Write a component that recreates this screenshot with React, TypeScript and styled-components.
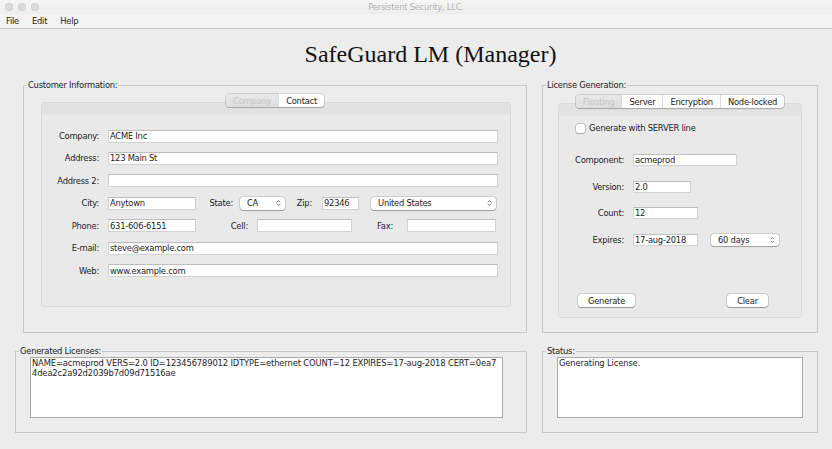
import React from "react";
import styled, { createGlobalStyle, css } from "styled-components";

const GlobalStyle = createGlobalStyle`
  html, body { margin: 0; padding: 0; background: #ececec; }
  #root { width: 832px; height: 449px; overflow: hidden; }
  *, *::before, *::after { box-sizing: border-box; }
`;

const SANS = `"DejaVu Sans", "Noto Sans", Arial, sans-serif`;

const Window = styled.div`
  width: 832px;
  height: 449px;
  display: flex;
  flex-direction: column;
  background: #ececec;
  font-family: ${SANS};
  font-size: 8.4px;
  letter-spacing: -0.25px;
  color: #1c1c1c;
`;

const TitleBar = styled.header`
  flex: 0 0 14px;
  display: grid;
  grid-template-columns: 1fr auto 1fr;
  align-items: center;
  background: linear-gradient(#f6f6f6, #ededed);
`;

const Lights = styled.div`
  display: flex;
  gap: 5px;
  margin-left: 5px;
`;

const Light = styled.span`
  width: 8px;
  height: 8px;
  border-radius: 50%;
  background: #dadada;
  box-shadow: inset 0 0 0 0.5px #cbcbcb;
`;

const WindowTitle = styled.div`
  color: #b4b4b4;
`;

const MenuBar = styled.nav`
  flex: 0 0 15px;
  display: flex;
  align-items: center;
  gap: 13px;
  padding-left: 6px;
  border-bottom: 1px solid #c6c6c6;
  background: #f3f3f3;
`;

const MenuItem = styled.span``;

const Heading = styled.h1`
  flex: 0 0 51px;
  margin: 0;
  padding: 12px 0 0 29px;
  text-align: center;
  font: 400 24px/27px "Liberation Serif", "Times New Roman", serif;
  letter-spacing: 0;
  color: #111;
`;

const Main = styled.main`
  display: grid;
  grid-template-columns: 512px 276px;
  grid-template-rows: 253px 87px;
  column-gap: 15px;
  row-gap: 13px;
  padding-left: 15px;
`;

const Group = styled.fieldset<{ $indent?: number }>`
  margin: 0 0 0 ${(p) => p.$indent ?? 0}px;
  padding: 0;
  min-width: 0;
  border: 1px solid #c9c9c9;
  display: flex;
  flex-direction: column;
`;

const Legend = styled.legend`
  margin-left: 3px;
  padding: 0 1px;
  line-height: 10px;
  color: #222;
`;

const TabStrip = styled.div<{ $top: number }>`
  align-self: center;
  display: flex;
  height: 13px;
  margin: ${(p) => p.$top}px 0 -5px;
  position: relative;
  z-index: 1;
  border-radius: 3px;
  background: #fff;
  box-shadow: 0 0 0 0.5px rgba(0, 0, 0, 0.22), 0 0.5px 1px rgba(0, 0, 0, 0.18);
  overflow: hidden;
`;

const Tab = styled.span<{ $active?: boolean }>`
  display: flex;
  align-items: center;
  padding: 0 7px;
  white-space: nowrap;
  ${(p) =>
    p.$active
      ? css`
          background: linear-gradient(#e8e8e8, #dedede);
          color: #c6c6c6;
        `
      : css`
          color: #1c1c1c;
        `}
  & + & {
    border-left: 1px solid #dcdcdc;
  }
`;

const Panel = styled.div<{ $left: number; $right: number; $height: number }>`
  margin: 0 ${(p) => p.$right}px 0 ${(p) => p.$left}px;
  height: ${(p) => p.$height}px;
  border: 1px solid #dadada;
  border-radius: 3px;
  background: linear-gradient(#e2e2e2 0, #e2e2e2 11px, #e9e9e9 12px);
  display: flex;
  flex-direction: column;
`;

const Form = styled.div<{ $top: number; $gap: number }>`
  display: flex;
  flex-direction: column;
  margin-top: ${(p) => p.$top}px;
  row-gap: ${(p) => p.$gap}px;
`;

const Row = styled.div<{ $h: number }>`
  display: flex;
  align-items: center;
  height: ${(p) => p.$h}px;
`;

const Label = styled.label<{ $w: number; $gap?: number }>`
  flex: 0 0 ${(p) => p.$w}px;
  padding-right: ${(p) => p.$gap ?? 9}px;
  text-align: right;
  white-space: nowrap;
`;

const Field = styled.input<{ $w: number; $ml?: number }>`
  flex: 0 0 ${(p) => p.$w}px;
  width: ${(p) => p.$w}px;
  height: 100%;
  margin: 0 0 0 ${(p) => p.$ml ?? 0}px;
  padding: 0 1px;
  border: 1px solid #d2d2d2;
  border-top-color: #bdbdbd;
  border-radius: 0;
  background: #fff;
  font: inherit;
  letter-spacing: inherit;
  color: inherit;
  outline: none;
`;

const Combo = styled.div<{ $w: number; $ml?: number }>`
  flex: 0 0 ${(p) => p.$w}px;
  height: 100%;
  margin-left: ${(p) => p.$ml ?? 0}px;
  display: flex;
  align-items: center;
  justify-content: space-between;
  padding: 0 4px 0 7px;
  background: #fff;
  border-radius: 3px;
  box-shadow: 0 0 0 0.5px rgba(0, 0, 0, 0.2), 0 0.5px 1px rgba(0, 0, 0, 0.25);
`;

const Arrows = () => (
  <svg width="5" height="8" viewBox="0 0 5 8" aria-hidden="true">
    <path d="M1 3.2 L2.5 1.6 L4 3.2 M1 4.8 L2.5 6.4 L4 4.8" fill="none" stroke="#555" strokeWidth="0.8" />
  </svg>
);

const CheckRow = styled.label`
  display: flex;
  align-items: center;
  height: 10px;
  margin: 19px 0 0 17px;
  gap: 4px;
`;

const CheckBox = styled.span`
  width: 9px;
  height: 9px;
  border-radius: 2px;
  background: #fff;
  box-shadow: 0 0 0 0.5px rgba(0, 0, 0, 0.3), 0 0.5px 1px rgba(0, 0, 0, 0.15);
`;

const ButtonRow = styled.div`
  display: flex;
  justify-content: space-between;
  height: 13px;
  margin-top: 48px;
  padding: 0 33px 0 19px;
`;

const Button = styled.button<{ $w: number }>`
  width: ${(p) => p.$w}px;
  height: 13px;
  padding: 0;
  border: none;
  border-radius: 3px;
  background: #fff;
  box-shadow: 0 0 0 0.5px rgba(0, 0, 0, 0.22), 0 0.5px 1px rgba(0, 0, 0, 0.25);
  font: inherit;
  letter-spacing: inherit;
  color: inherit;
`;

const TextArea = styled.div<{ $ml: number; $w: number }>`
  margin: 1px 0 0 ${(p) => p.$ml}px;
  width: ${(p) => p.$w}px;
  height: 61px;
  padding: 0 1px;
  background: #fff;
  border: 1px solid #ababab;
  line-height: 10px;
  letter-spacing: -0.14px;
  white-space: pre;
  overflow: hidden;
`;

export default function App() {
  return (
    <>
      <GlobalStyle />
      <Window>
        <TitleBar>
          <Lights>
            <Light />
            <Light />
            <Light />
          </Lights>
          <WindowTitle>Persistent Security, LLC.</WindowTitle>
          <span />
        </TitleBar>
        <MenuBar>
          <MenuItem>File</MenuItem>
          <MenuItem>Edit</MenuItem>
          <MenuItem>Help</MenuItem>
        </MenuBar>
        <Heading>SafeGuard LM (Manager)</Heading>
        <Main>
          <Group $indent={8}>
            <Legend>Customer Information:</Legend>
            <TabStrip $top={4}>
              <Tab $active>Company</Tab>
              <Tab>Contact</Tab>
            </TabStrip>
            <Panel $left={17} $right={15} $height={205}>
              <Form $top={26.5} $gap={9.45}>
                <Row $h={13}>
                  <Label $w={66}>Company:</Label>
                  <Field $w={390} readOnly value="ACME Inc" />
                </Row>
                <Row $h={13}>
                  <Label $w={66}>Address:</Label>
                  <Field $w={390} readOnly value="123 Main St" />
                </Row>
                <Row $h={13}>
                  <Label $w={66}>Address 2:</Label>
                  <Field $w={390} readOnly value="" />
                </Row>
                <Row $h={13}>
                  <Label $w={66}>City:</Label>
                  <Field $w={88} readOnly value="Anytown" />
                  <Label $w={44} $gap={7}>State:</Label>
                  <Combo $w={45}>
                    CA
                    <Arrows />
                  </Combo>
                  <Label $w={37} $gap={10}>Zip:</Label>
                  <Field $w={37} readOnly value="92346" />
                  <Combo $w={125} $ml={12}>
                    United States
                    <Arrows />
                  </Combo>
                </Row>
                <Row $h={13}>
                  <Label $w={66}>Phone:</Label>
                  <Field $w={88} readOnly value="631-606-6151" />
                  <Label $w={61}>Cell:</Label>
                  <Field $w={95} readOnly value="" />
                  <Label $w={55} $gap={14}>Fax:</Label>
                  <Field $w={89} readOnly value="" />
                </Row>
                <Row $h={13}>
                  <Label $w={66}>E-mail:</Label>
                  <Field $w={390} readOnly value="steve@example.com" />
                </Row>
                <Row $h={13}>
                  <Label $w={66}>Web:</Label>
                  <Field $w={390} readOnly value="www.example.com" />
                </Row>
              </Form>
            </Panel>
          </Group>

          <Group>
            <Legend>License Generation:</Legend>
            <TabStrip $top={5}>
              <Tab $active>Floating</Tab>
              <Tab>Server</Tab>
              <Tab>Encryption</Tab>
              <Tab>Node-locked</Tab>
            </TabStrip>
            <Panel $left={15} $right={15} $height={215}>
              <CheckRow>
                <CheckBox />
                Generate with SERVER line
              </CheckRow>
              <Form $top={21} $gap={14.7}>
                <Row $h={12}>
                  <Label $w={74}>Component:</Label>
                  <Field $w={104} readOnly value="acmeprod" />
                </Row>
                <Row $h={12}>
                  <Label $w={74}>Version:</Label>
                  <Field $w={58} readOnly value="2.0" />
                </Row>
                <Row $h={12}>
                  <Label $w={74}>Count:</Label>
                  <Field $w={65} readOnly value="12" />
                </Row>
                <Row $h={12}>
                  <Label $w={74}>Expires:</Label>
                  <Field $w={65} readOnly value="17-aug-2018" />
                  <Combo $w={68} $ml={13}>
                    60 days
                    <Arrows />
                  </Combo>
                </Row>
              </Form>
              <ButtonRow>
                <Button $w={57}>Generate</Button>
                <Button $w={41}>Clear</Button>
              </ButtonRow>
            </Panel>
          </Group>

          <Group>
            <Legend>Generated Licenses:</Legend>
            <TextArea $ml={14} $w={473}>
              {"NAME=acmeprod VERS=2.0 ID=123456789012 IDTYPE=ethernet COUNT=12 EXPIRES=17-aug-2018 CERT=0ea7\n4dea2c2a92d2039b7d09d71516ae"}
            </TextArea>
          </Group>

          <Group>
            <Legend>Status:</Legend>
            <TextArea $ml={14} $w={246}>
              Generating License.
            </TextArea>
          </Group>
        </Main>
      </Window>
    </>
  );
}
